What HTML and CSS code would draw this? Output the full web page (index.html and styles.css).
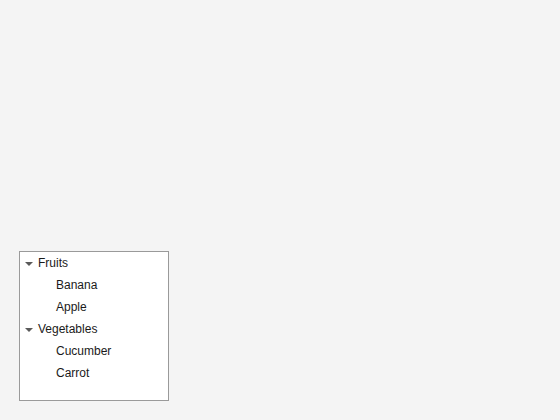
FILE: index.html
```html
<!DOCTYPE html>
<html>
<head>
<meta charset="utf-8">
<link rel="stylesheet" href="styles.css">
</head>
<body>
<div class="tree">
  <div class="row group"><span class="caret"></span>Fruits</div>
  <div class="row leaf">Banana</div>
  <div class="row leaf">Apple</div>
  <div class="row group"><span class="caret"></span>Vegetables</div>
  <div class="row leaf">Cucumber</div>
  <div class="row leaf">Carrot</div>
</div>
</body>
</html>
```
FILE: styles.css
```css
html, body {
  margin: 0;
  height: 100%;
}
body {
  background: #f4f4f4;
  box-sizing: border-box;
  display: flex;
  align-items: flex-end;
  padding: 0 0 19px 19px;
  font-family: "Liberation Sans", Arial, sans-serif;
  font-size: 12px;
  color: #1a1a1a;
}
.tree {
  width: 148px;
  height: 148px;
  background: #fff;
  border: 1px solid #9a9a9a;
}
.row {
  height: 22px;
  line-height: 22px;
  display: flex;
  align-items: center;
  white-space: nowrap;
}
.group {
  padding-left: 5px;
}
.leaf {
  padding-left: 36px;
}
.caret {
  width: 0;
  height: 0;
  border-left: 4px solid transparent;
  border-right: 4px solid transparent;
  border-top: 4px solid #5a5a5a;
  margin-right: 5px;
  margin-top: 1px;
}
```
